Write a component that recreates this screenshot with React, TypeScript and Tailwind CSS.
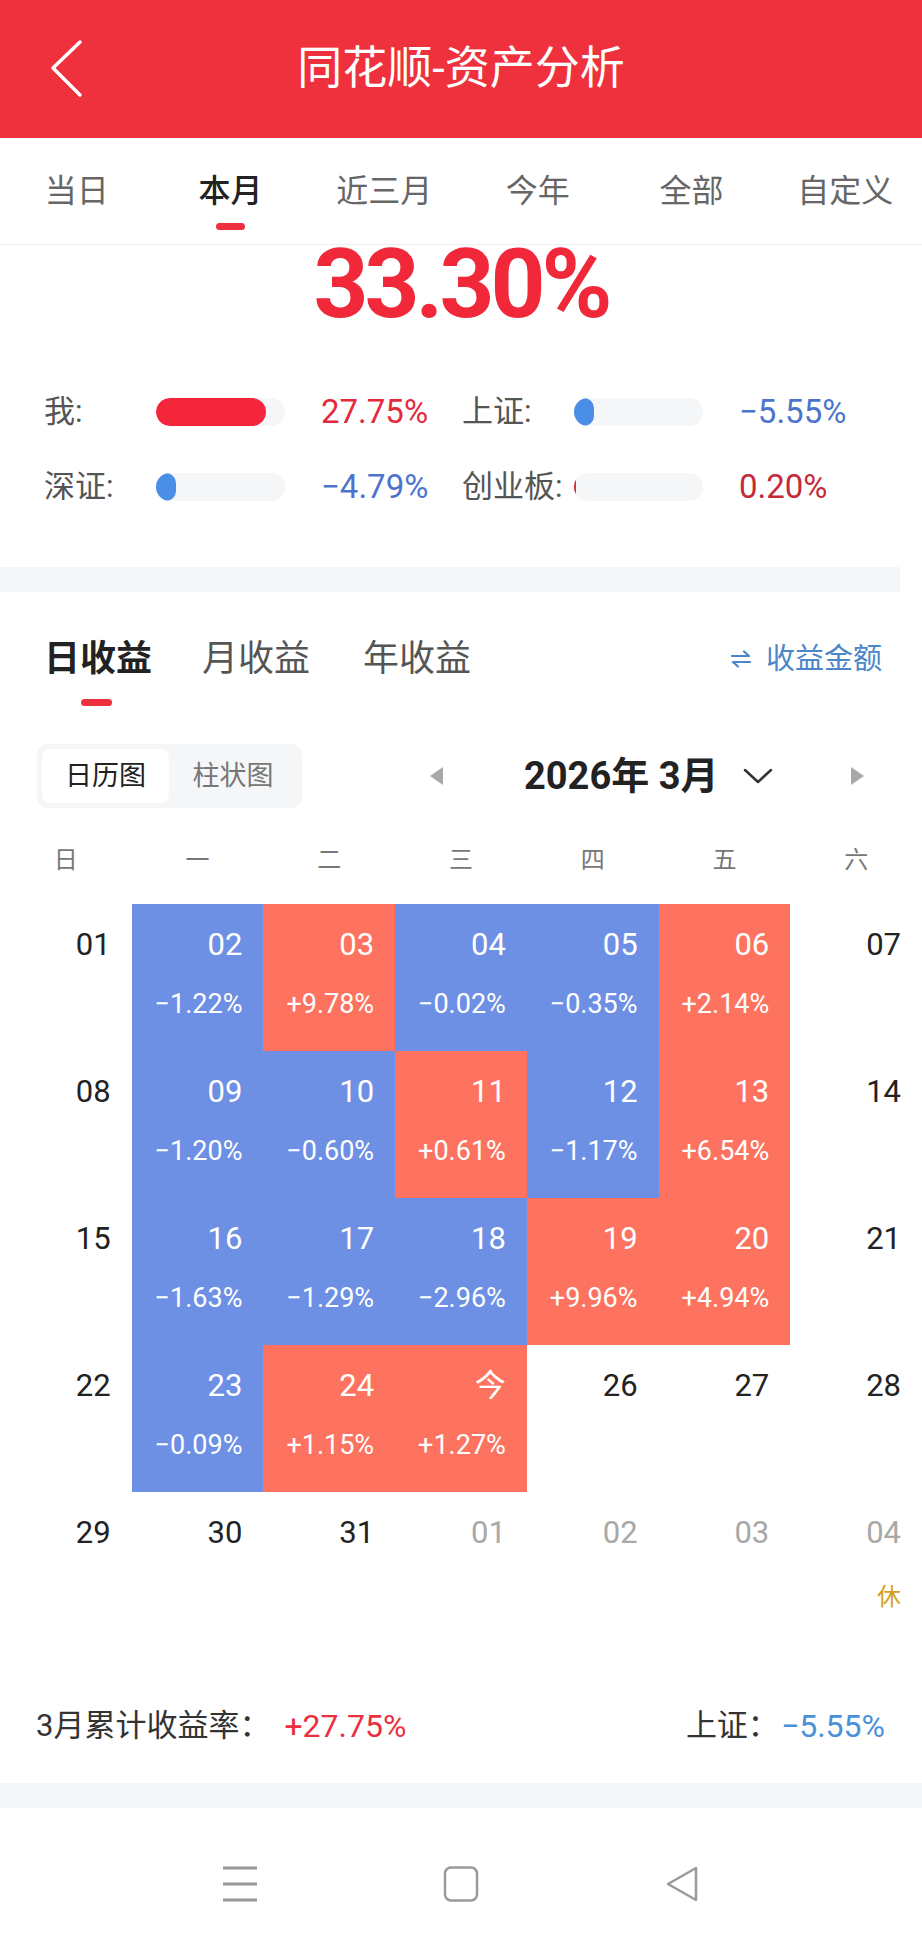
import React from "react";

type Cell = { d: string; kind: "out" | "up" | "down" | "next"; pct?: string; rest?: boolean };

const rows: Cell[][] = [
  [
    { d: "01", kind: "out" },
    { d: "02", kind: "down", pct: "−1.22%" },
    { d: "03", kind: "up", pct: "+9.78%" },
    { d: "04", kind: "down", pct: "−0.02%" },
    { d: "05", kind: "down", pct: "−0.35%" },
    { d: "06", kind: "up", pct: "+2.14%" },
    { d: "07", kind: "out" },
  ],
  [
    { d: "08", kind: "out" },
    { d: "09", kind: "down", pct: "−1.20%" },
    { d: "10", kind: "down", pct: "−0.60%" },
    { d: "11", kind: "up", pct: "+0.61%" },
    { d: "12", kind: "down", pct: "−1.17%" },
    { d: "13", kind: "up", pct: "+6.54%" },
    { d: "14", kind: "out" },
  ],
  [
    { d: "15", kind: "out" },
    { d: "16", kind: "down", pct: "−1.63%" },
    { d: "17", kind: "down", pct: "−1.29%" },
    { d: "18", kind: "down", pct: "−2.96%" },
    { d: "19", kind: "up", pct: "+9.96%" },
    { d: "20", kind: "up", pct: "+4.94%" },
    { d: "21", kind: "out" },
  ],
  [
    { d: "22", kind: "out" },
    { d: "23", kind: "down", pct: "−0.09%" },
    { d: "24", kind: "up", pct: "+1.15%" },
    { d: "今", kind: "up", pct: "+1.27%" },
    { d: "26", kind: "out" },
    { d: "27", kind: "out" },
    { d: "28", kind: "out" },
  ],
  [
    { d: "29", kind: "out" },
    { d: "30", kind: "out" },
    { d: "31", kind: "out" },
    { d: "01", kind: "next" },
    { d: "02", kind: "next" },
    { d: "03", kind: "next" },
    { d: "04", kind: "next", rest: true },
  ],
];

const periodTabs = ["当日", "本月", "近三月", "今年", "全部", "自定义"];
const weekdays = ["日", "一", "二", "三", "四", "五", "六"];

function StatRow({
  label,
  fill,
  fillClass,
  value,
  valueClass,
}: {
  label: string;
  fill: number;
  fillClass: string;
  value: string;
  valueClass: string;
}) {
  return (
    <div className="flex items-center h-[40px]">
      <span className="w-[112px] text-[31px] leading-[40px] text-[#555] whitespace-nowrap">{label}</span>
      <div className="w-[129px] h-[28px] rounded-full bg-[#f5f6f8] overflow-hidden">
        <div className={`h-full rounded-full ${fillClass}`} style={{ width: fill }} />
      </div>
      <span className={`ml-[36px] text-[33px] leading-[40px] ${valueClass}`}>{value}</span>
    </div>
  );
}

function DayCell({ c }: { c: Cell }) {
  const bg = c.kind === "up" ? "bg-[#fd735f]" : c.kind === "down" ? "bg-[#6d8fe4]" : "bg-white";
  const color =
    c.kind === "up" || c.kind === "down" ? "text-white" : c.kind === "next" ? "text-[#a8a8a8]" : "text-[#222]";
  return (
    <div className={`h-[147px] flex flex-col items-end pr-[21px] pt-[23px] ${bg} ${color}`}>
      <span className="text-[31px] leading-[36px]">{c.d}</span>
      {c.pct && <span className="mt-[26px] text-[27px] leading-[30px]">{c.pct}</span>}
      {c.rest && <span className="mt-[31px] text-[24px] leading-[30px] text-[#d4a020]">休</span>}
    </div>
  );
}

export default function App() {
  return (
    <div className="w-[922px] h-[1948px] bg-white overflow-hidden font-[Roboto,'Noto_Sans_CJK_SC',sans-serif]">
      {/* header */}
      <div className="h-[138px] bg-[#ef313d] grid grid-cols-[120px_1fr_120px] items-center">
        <svg width="40" height="60" viewBox="0 0 40 60" className="ml-[46px]">
          <path d="M34 3 L7 29 L34 56" fill="none" stroke="white" strokeWidth="3.5" strokeLinecap="round" strokeLinejoin="round" />
        </svg>
        <div className="text-center text-white text-[45px] leading-[60px]">同花顺-资产分析</div>
        <div />
      </div>

      {/* period tabs */}
      <div className="h-[107px] border-b border-[#eeeeee] grid grid-cols-6 relative z-10 bg-white">
        {periodTabs.map((t, i) => (
          <div key={t} className="flex flex-col items-center pt-[33px]">
            <span className={`text-[32px] leading-[40px] ${i === 1 ? "text-[#222] font-medium" : "text-[#666]"}`}>{t}</span>
            {i === 1 && <div className="mt-[12px] w-[29px] h-[7px] rounded-full bg-[#ee2f3d]" />}
          </div>
        ))}
      </div>

      {/* summary */}
      <div className="h-[322px] overflow-hidden">
        <div className="-mt-[9px] text-center text-[96px] leading-[96px] font-bold tracking-[-4px] text-[#f0283a]">
          33.30%
        </div>
        <div className="mt-[60px] pl-[44px] grid grid-cols-[418px_1fr] gap-y-[35px]">
          <StatRow label="我:" fill={110} fillClass="bg-[#f5253b]" value="27.75%" valueClass="text-[#e4293d]" />
          <StatRow label="上证:" fill={20} fillClass="bg-[#4a8ee8]" value="−5.55%" valueClass="text-[#4c74cc]" />
          <StatRow label="深证:" fill={20} fillClass="bg-[#4a8ee8]" value="−4.79%" valueClass="text-[#4c74cc]" />
          <StatRow label="创业板:" fill={2} fillClass="bg-[#e0283a]" value="0.20%" valueClass="text-[#c42a3a]" />
        </div>
      </div>

      <div className="h-[25px] w-[900px] bg-[#f5f6f8]" />

      {/* income section */}
      <div className="pt-[43px]">
        <div className="px-[40px] pl-[44px] flex items-center">
          <span className="text-[36px] leading-[48px] font-bold text-[#222]">日收益</span>
          <span className="ml-[50px] text-[36px] leading-[48px] text-[#555]">月收益</span>
          <span className="ml-[53px] text-[36px] leading-[48px] text-[#555]">年收益</span>
          <div className="ml-auto flex items-center text-[#4a86c8]">
            <svg width="22" height="18" viewBox="0 0 22 18">
              <path d="M2 6 H19 L14 1.5 M20 12 H3 L8 16.5" fill="none" stroke="#4a86c8" strokeWidth="2.2" strokeLinecap="round" strokeLinejoin="round" />
            </svg>
            <span className="ml-[14px] text-[29px] leading-[40px]">收益金额</span>
          </div>
        </div>
        <div className="ml-[81px] mt-[16px] w-[31px] h-[7px] rounded-full bg-[#ee2f3d]" />

        {/* chart switch + month */}
        <div className="mt-[38px] pl-[37px] flex items-center">
          <div className="w-[265px] h-[64px] rounded-[10px] bg-[#f5f6f8] p-[5px] flex">
            <div className="w-[127px] h-[54px] rounded-[8px] bg-white flex items-center justify-center text-[27px] text-[#222]">日历图</div>
            <div className="flex-1 flex items-center justify-center text-[27px] text-[#777]">柱状图</div>
          </div>
          <svg width="16" height="20" viewBox="0 0 16 20" className="ml-[126px]">
            <path d="M15 1 L2 10 L15 19 Z" fill="#a8a8a8" />
          </svg>
          <span className="ml-[80px] text-[38px] leading-[44px] font-bold text-[#222] whitespace-nowrap">2026年 3月</span>
          <svg width="32" height="18" viewBox="0 0 32 18" className="ml-[24px]">
            <path d="M3 3 L16 15 L29 3" fill="none" stroke="#333" strokeWidth="2.5" strokeLinecap="round" strokeLinejoin="round" />
          </svg>
          <svg width="16" height="20" viewBox="0 0 16 20" className="ml-[76px]">
            <path d="M1 1 L14 10 L1 19 Z" fill="#a8a8a8" />
          </svg>
        </div>

        {/* weekdays */}
        <div className="mt-[36px] grid grid-cols-7">
          {weekdays.map((w) => (
            <div key={w} className="text-center text-[24px] leading-[32px] text-[#777]">{w}</div>
          ))}
        </div>

        {/* calendar */}
        <div className="mt-[28px] grid grid-cols-7">
          {rows.flat().map((c, i) => (
            <DayCell key={i} c={c} />
          ))}
        </div>

        {/* month total */}
        <div className="mt-[69px] pl-[36px] pr-[37px] flex items-center h-[36px]">
          <span className="text-[31px] text-[#333]">3月累计收益率：</span>
          <span className="ml-[14px] text-[32px] text-[#e8303e]">+27.75%</span>
          <span className="ml-auto text-[31px] text-[#333]">上证：</span>
          <span className="ml-[2px] text-[32px] text-[#4a90d9]">−5.55%</span>
        </div>
      </div>

      <div className="mt-[39px] h-[25px] bg-[#f5f6f8]" />

      {/* system nav */}
      <div className="h-[139px] pt-[58px] flex justify-center gap-[185px]">
        <svg width="36" height="36" viewBox="0 0 36 36">
          <path d="M1 2 H35 M1 18 H35 M1 34 H35" stroke="#9a9a9a" strokeWidth="3" />
        </svg>
        <svg width="36" height="36" viewBox="0 0 36 36">
          <rect x="2" y="1.5" width="32" height="33" rx="6" fill="none" stroke="#9a9a9a" strokeWidth="2.5" />
        </svg>
        <svg width="36" height="36" viewBox="0 0 36 36">
          <path d="M32 2 L4 18 L32 34 Z" fill="none" stroke="#9a9a9a" strokeWidth="2.5" strokeLinejoin="round" />
        </svg>
      </div>
    </div>
  );
}
